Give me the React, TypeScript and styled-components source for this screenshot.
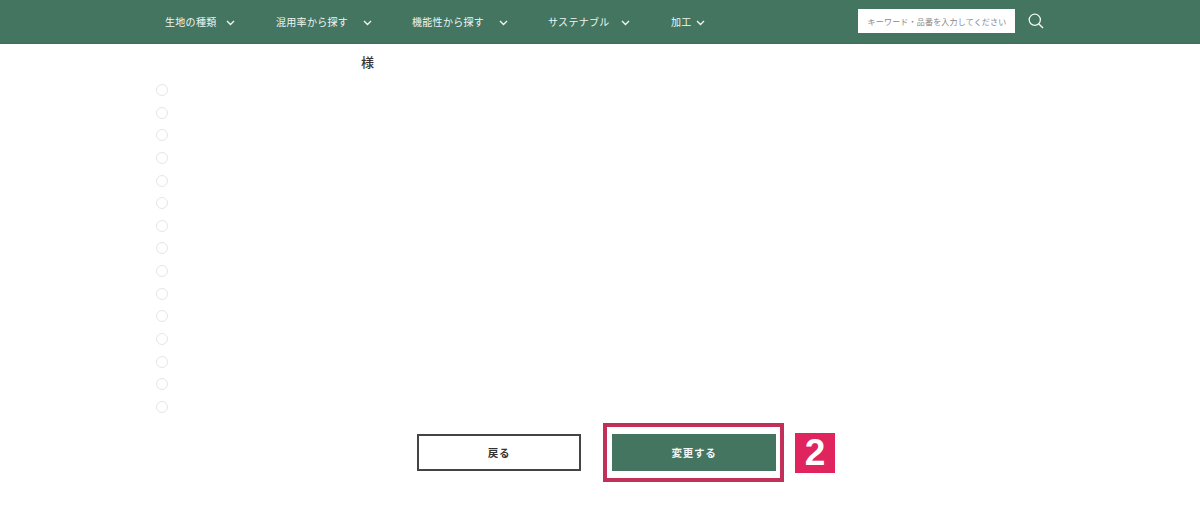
import React from "react";
import styled, { createGlobalStyle } from "styled-components";

const Global = createGlobalStyle`
  html, body { margin: 0; padding: 0; background: #fff; }
  body { font-family: "Noto Sans CJK JP", "Noto Sans", sans-serif; overflow: hidden; }
  * { box-sizing: border-box; }
`;

const Page = styled.div`
  width: 1200px;
  height: 523px;
  display: flex;
  flex-direction: column;
`;

const Header = styled.header`
  height: 44px;
  background: #437560;
  display: flex;
  align-items: center;
  padding: 0 0 0 165px;
  border-bottom: 1px solid #3f6e5a;
`;

const Nav = styled.nav`
  display: flex;
  align-items: center;
  width: 693px;
`;

const NavItem = styled.div<{ $w: number; $gap: number }>`
  width: ${(p) => p.$w}px;
  display: flex;
  align-items: center;
  gap: ${(p) => p.$gap}px;
  color: #f0f5f2;
  font-size: 10px;
  letter-spacing: 0.3px;
  line-height: 14px;
  white-space: nowrap;
`;

const Chevron = styled.svg`
  width: 9px;
  height: 6px;
  flex: none;
  margin-top: 2px;
`;

const SearchBox = styled.div`
  width: 157px;
  height: 24px;
  margin-top: -1px;
  padding-left: 1px;
  background: #fff;
  display: flex;
  align-items: center;
  justify-content: center;
  color: #888;
  font-size: 8px;
  letter-spacing: 0.2px;
  white-space: nowrap;
`;

const SearchIcon = styled.svg`
  width: 16px;
  height: 16px;
  margin-left: 13px;
  margin-top: -1px;
`;

const Main = styled.main`
  flex: 1;
  position: relative;
  display: flex;
  flex-direction: column;
`;

const NameRow = styled.div`
  padding: 9px 0 0 361px;
  height: 40px;
  font-size: 13px;
  line-height: 18px;
  font-weight: 500;
  color: #333;
`;

const RadioList = styled.div`
  display: flex;
  flex-direction: column;
  gap: 10.64px;
  padding-left: 156px;
`;

const Radio = styled.span`
  width: 12px;
  height: 12px;
  border-radius: 50%;
  border: 1.5px solid #e6e6e6;
  background: #fff;
`;

const Actions = styled.div`
  display: flex;
  gap: 31px;
  margin: 21px 0 0 417px;
  align-items: stretch;
`;

const Button = styled.div<{ $primary?: boolean }>`
  position: relative;
  width: 164px;
  height: 37px;
  display: flex;
  align-items: center;
  justify-content: center;
  font-size: 10.5px;
  font-weight: 700;
  letter-spacing: 0.8px;
  color: ${(p) => (p.$primary ? "#f4f7f5" : "#333")};
  background: ${(p) => (p.$primary ? "#437560" : "#fff")};
  border: ${(p) => (p.$primary ? "none" : "2px solid #444")};
`;

const Highlight = styled.span`
  position: absolute;
  left: -9px;
  top: -11px;
  width: 181px;
  height: 59px;
  border: 4px solid #c22f59;
  pointer-events: none;
`;

const StepBadge = styled.span`
  position: absolute;
  left: 183px;
  top: -1px;
  width: 40px;
  height: 40px;
  background: #e0245e;
  color: #fff;
  display: flex;
  align-items: center;
  justify-content: center;
  font-family: "Liberation Sans", sans-serif;
  font-size: 37px;
  font-weight: 700;
  letter-spacing: 0;
`;

const navItems = [
  { label: "生地の種類", w: 111, gap: 9 },
  { label: "混用率から探す", w: 136, gap: 15 },
  { label: "機能性から探す", w: 136, gap: 15 },
  { label: "サステナブル", w: 123, gap: 11 },
  { label: "加工", w: 60, gap: 4 },
];

export default function App() {
  return (
    <Page>
      <Global />
      <Header>
        <Nav>
          {navItems.map((n) => (
            <NavItem key={n.label} $w={n.w} $gap={n.gap}>
              {n.label}
              <Chevron viewBox="0 0 9 6" fill="none">
                <path d="M1 1 L4.5 4.5 L8 1" stroke="#f0f5f2" strokeWidth="1.4" />
              </Chevron>
            </NavItem>
          ))}
        </Nav>
        <SearchBox>キーワード・品番を入力してください</SearchBox>
        <SearchIcon viewBox="0 0 16 16" fill="none">
          <circle cx="6.8" cy="6.8" r="5.6" stroke="#f2f6f4" strokeWidth="1.3" />
          <path d="M10.9 10.9 L15 15" stroke="#f2f6f4" strokeWidth="1.4" />
        </SearchIcon>
      </Header>
      <Main>
        <NameRow>様</NameRow>
        <RadioList>
          {Array.from({ length: 15 }, (_, i) => (
            <Radio key={i} />
          ))}
        </RadioList>
        <Actions>
          <Button>戻る</Button>
          <Button $primary>
            変更する
            <Highlight />
            <StepBadge>2</StepBadge>
          </Button>
        </Actions>
      </Main>
    </Page>
  );
}
